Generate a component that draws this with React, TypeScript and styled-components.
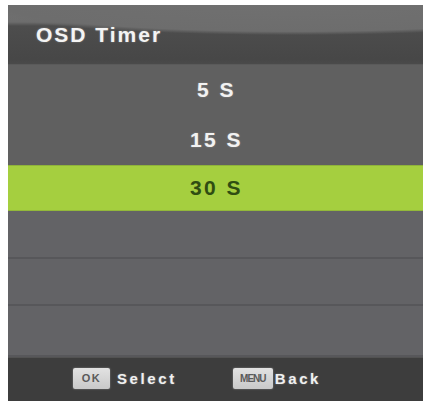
import React from 'react';
import styled, { createGlobalStyle } from 'styled-components';

const GlobalStyle = createGlobalStyle`
  html, body {
    margin: 0;
    padding: 0;
    background: #ffffff;
  }
  body {
    font-family: 'Liberation Sans', Arial, sans-serif;
  }
`;

interface Option {
  label: string;
  height: number;
  selected?: boolean;
}

const OPTIONS: Option[] = [
  { label: '5 S', height: 50 },
  { label: '15 S', height: 50 },
  { label: '30 S', height: 46, selected: true },
  { label: '', height: 48 },
  { label: '', height: 47 },
  { label: '', height: 51 },
];

const Page = styled.div`
  padding: 5px 3px 0 8px;
  height: 401px;
  box-sizing: border-box;
  overflow: hidden;
`;

const Panel = styled.div`
  display: flex;
  flex-direction: column;
  width: 415px;
  height: 396px;
  background: #616161;
  box-shadow: inset 1px 0 0 #4a4a4a;
`;

const Header = styled.div`
  display: flex;
  align-items: center;
  height: 60px;
  padding-left: 28px;
  flex-shrink: 0;
  background:
    radial-gradient(ellipse 330px 30px at 285px 0px, #707070 0%, #6d6d6d 88%, rgba(109, 109, 109, 0) 100%),
    linear-gradient(#757575 0, #6d6d6d 17px, #4d4d4d 21px, #474747 54px, #4a4a4a 59px, #6a6a6a 60px);
`;

const Title = styled.div`
  font-size: 21px;
  font-weight: 700;
  letter-spacing: 2px;
  color: #f4f4f4;
  text-shadow: 0 0 2px rgba(255, 255, 255, 0.35);
`;

const List = styled.div`
  display: flex;
  flex-direction: column;
  flex-shrink: 0;
`;

const Row = styled.div<{ $selected?: boolean; $lower?: boolean }>`
  display: flex;
  align-items: center;
  justify-content: center;
  box-sizing: border-box;
  background: ${({ $selected, $lower }) =>
    $selected ? '#a5cf3f' : $lower ? '#636366' : '#606060'};
  border-bottom: ${({ $lower }) => ($lower ? '2px solid #57575a' : 'none')};
  box-shadow: ${({ $selected }) =>
    $selected ? 'inset 0 1px 0 #8fb33a, inset 0 -1px 0 #93b83a' : 'none'};
  font-size: 21px;
  font-weight: 700;
  letter-spacing: 2.5px;
  padding-left: 2px;
  color: ${({ $selected }) => ($selected ? '#2f4d12' : '#f2f2f2')};
  text-shadow: ${({ $selected }) =>
    $selected ? 'none' : '0 0 2px rgba(255, 255, 255, 0.3)'};
`;

const Footer = styled.div`
  flex: 1;
  display: flex;
  align-items: center;
  gap: 56px;
  padding-left: 65px;
  padding-bottom: 2px;
  background: #3d3d3d;
  box-shadow: inset 0 1px 0 #525252;
`;

const Hint = styled.div<{ $gap: number }>`
  display: flex;
  align-items: center;
  gap: ${({ $gap }) => $gap}px;
`;

const Key = styled.div<{ $width: number }>`
  display: flex;
  align-items: center;
  justify-content: center;
  width: ${({ $width }) => $width}px;
  height: 21px;
  border-radius: 2px;
  background: linear-gradient(#e2e2e2, #c9c9c9);
  color: #5a5a5a;
  font-weight: 700;
  font-size: ${({ $width }) => ($width > 38 ? 10 : 11)}px;
  letter-spacing: ${({ $width }) => ($width > 38 ? -1 : 1.5)}px;
  box-shadow: 0 0 2px rgba(255, 255, 255, 0.4);
`;

const Label = styled.span`
  font-size: 15px;
  font-weight: 700;
  letter-spacing: 2.6px;
  color: #f0f0f0;
  text-shadow: 0 0 2px rgba(255, 255, 255, 0.35);
`;

export default function App() {
  return (
    <>
      <GlobalStyle />
      <Page>
        <Panel>
          <Header>
            <Title>OSD Timer</Title>
          </Header>
          <List>
            {OPTIONS.map((opt, i) => (
              <Row
                key={i}
                style={{ height: opt.height }}
                $selected={opt.selected}
                $lower={i > 2}
              >
                {opt.label}
              </Row>
            ))}
          </List>
          <Footer>
            <Hint $gap={7}>
              <Key $width={37}>OK</Key>
              <Label>Select</Label>
            </Hint>
            <Hint $gap={2}>
              <Key $width={40}>MENU</Key>
              <Label>Back</Label>
            </Hint>
          </Footer>
        </Panel>
      </Page>
    </>
  );
}
